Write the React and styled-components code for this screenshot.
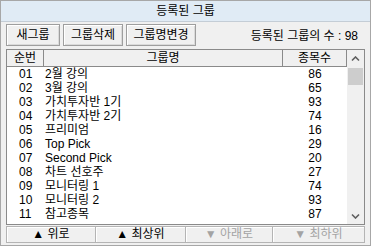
import React from "react";
import styled, { createGlobalStyle } from "styled-components";

const GlobalStyle = createGlobalStyle`
  html, body {
    margin: 0;
    padding: 0;
    background: #f0f0f0;
  }
  * {
    box-sizing: border-box;
  }
`;

const FONT = `"Liberation Sans", "Noto Sans CJK KR", sans-serif`;

const groups = [
  { no: "01", name: "2월 강의", count: 86 },
  { no: "02", name: "3월 강의", count: 65 },
  { no: "03", name: "가치투자반 1기", count: 93 },
  { no: "04", name: "가치투자반 2기", count: 74 },
  { no: "05", name: "프리미엄", count: 16 },
  { no: "06", name: "Top Pick", count: 29 },
  { no: "07", name: "Second Pick", count: 20 },
  { no: "08", name: "차트 선호주", count: 27 },
  { no: "09", name: "모니터링 1", count: 74 },
  { no: "10", name: "모니터링 2", count: 93 },
  { no: "11", name: "참고종목", count: 87 },
];

const Window = styled.div`
  width: 371px;
  height: 246px;
  border: 1px solid #a7a7a7;
  background: #f0f0f0;
  display: flex;
  flex-direction: column;
  font-family: ${FONT};
  font-size: 12px;
  color: #000;
  overflow: hidden;
`;

const TitleBar = styled.div`
  height: 21px;
  flex: none;
  background: #e0ebf5;
  border-bottom: 1px solid #c4cdd6;
  display: flex;
  align-items: center;
  justify-content: center;
  line-height: 20px;
`;

const Toolbar = styled.div`
  flex: none;
  display: flex;
  align-items: center;
  gap: 3px;
  padding: 1px 5px 0 5px;
  height: 25px;
`;

const ToolButton = styled.button`
  height: 22px;
  width: ${(p) => p.$w}px;
  padding: 0;
  font-family: ${FONT};
  font-size: 12px;
  line-height: 20px;
  color: #000;
  background: #f0f0f0;
  border: 1px solid #9e9e9e;
  box-shadow: inset 1px 1px 0 #ffffff, inset -1px -1px 0 #dadada;
`;

const Count = styled.span`
  margin-left: auto;
  margin-right: 7px;
  line-height: 16px;
  padding-top: 2px;
`;

const ListBox = styled.div`
  flex: 1;
  margin: 2px 5px 0 5px;
  border: 1px solid #8a8a8a;
  background: #fff;
  display: flex;
  min-height: 0;
`;

const ListBody = styled.div`
  flex: 1;
  display: flex;
  flex-direction: column;
`;

const Row = styled.div`
  display: grid;
  grid-template-columns: 37px 239px 1fr;
  height: ${(p) => (p.$head ? 17 : 14)}px;
  line-height: ${(p) => (p.$head ? 16 : 14)}px;
  background: ${(p) => (p.$head ? "#f0f0f0" : "#fff")};
  border-bottom: ${(p) => (p.$head ? "1px solid #8a8a8a" : "none")};
`;

const HeadCell = styled.div`
  text-align: center;
  border-right: 1px solid #8a8a8a;
`;

const Cell = styled.div`
  white-space: nowrap;
  overflow: hidden;
  text-align: ${(p) => p.$align || "left"};
  padding-left: ${(p) => p.$pad || 0}px;
`;

const Scrollbar = styled.div`
  width: 17px;
  flex: none;
  background: #f0f0f0;
  display: flex;
  flex-direction: column;
`;

const ArrowBox = styled.div`
  height: 17px;
  display: flex;
  align-items: center;
  justify-content: center;
`;

const Track = styled.div`
  flex: 1;
  padding: 1px 1px 0 1px;
`;

const Thumb = styled.div`
  height: 17px;
  background: #cdcdcd;
`;

const BottomBar = styled.div`
  flex: none;
  height: 17px;
  margin: 1px 5px 2px 5px;
  display: grid;
  grid-template-columns: 90px 90px 87px 1fr;
`;

const MoveButton = styled.button`
  height: 17px;
  padding: 0;
  font-family: ${FONT};
  font-size: 12px;
  line-height: 15px;
  color: ${(p) => (p.disabled ? "#a3a3a3" : "#000")};
  background: #f0f0f0;
  border: 1px solid #b4b4b4;
  border-left-width: ${(p) => (p.$first ? 1 : 0)}px;
  box-shadow: inset 1px 1px 0 #ffffff;
`;

const Chevron = ({ down }) => (
  <svg width="9" height="6" viewBox="0 0 9 6">
    <path
      d={down ? "M1 1.5 L4.5 5 L8 1.5" : "M1 4.5 L4.5 1 L8 4.5"}
      fill="none"
      stroke="#5f5f5f"
      strokeWidth="1.6"
    />
  </svg>
);

export default function App() {
  return (
    <>
      <GlobalStyle />
      <Window>
        <TitleBar>등록된 그룹</TitleBar>
        <Toolbar>
          <ToolButton $w={54}>새그룹</ToolButton>
          <ToolButton $w={60}>그룹삭제</ToolButton>
          <ToolButton $w={70}>그룹명변경</ToolButton>
          <Count>등록된 그룹의 수 : 98</Count>
        </Toolbar>
        <ListBox>
          <ListBody>
            <Row $head>
              <HeadCell>순번</HeadCell>
              <HeadCell>그룹명</HeadCell>
              <HeadCell>종목수</HeadCell>
            </Row>
            {groups.map((g) => (
              <Row key={g.no}>
                <Cell $pad={12}>{g.no}</Cell>
                <Cell $pad={1}>{g.name}</Cell>
                <Cell $align="center">{g.count}</Cell>
              </Row>
            ))}
          </ListBody>
          <Scrollbar>
            <ArrowBox>
              <Chevron />
            </ArrowBox>
            <Track>
              <Thumb />
            </Track>
            <ArrowBox>
              <Chevron down />
            </ArrowBox>
          </Scrollbar>
        </ListBox>
        <BottomBar>
          <MoveButton $first>▲ 위로</MoveButton>
          <MoveButton>▲ 최상위</MoveButton>
          <MoveButton disabled>▼ 아래로</MoveButton>
          <MoveButton disabled>▼ 최하위</MoveButton>
        </BottomBar>
      </Window>
    </>
  );
}
